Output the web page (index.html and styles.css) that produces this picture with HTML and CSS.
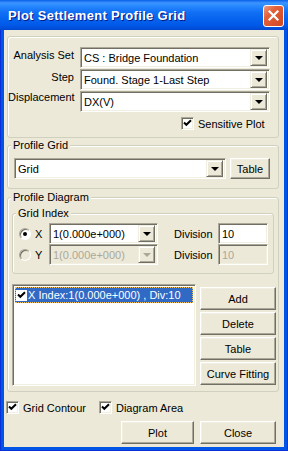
FILE: index.html
```html
<!DOCTYPE html>
<html>
<head>
    <meta charset='utf-8'>
    <title>Plot Settlement Profile Grid</title>
    <link rel="stylesheet" href="styles.css">
</head>
<body>
<div class="window">
    <div class="titlebar">
        <span class="title">Plot Settlement Profile Grid</span>
        <span class="close">
            <svg width="11" height="11" viewBox="0 0 11 11"><path d="M1.5 1.5 L9.5 9.5 M9.5 1.5 L1.5 9.5" stroke="#fff" stroke-width="2.2" stroke-linecap="square"/></svg>
        </span>
    </div>
    <div class="frame">
        <div class="client">

            <!-- analysis set / step / displacement -->
            <div class="group g-top">
                <div class="rows">
                    <div class="row">
                        <span class="lbl">Analysis Set</span>
                        <div class="combo c-wide"><span class="ctext">CS : Bridge Foundation</span><span class="arrow"><i class="tri"></i></span></div>
                    </div>
                    <div class="row">
                        <span class="lbl">Step</span>
                        <div class="combo c-wide"><span class="ctext">Found. Stage 1-Last Step</span><span class="arrow"><i class="tri"></i></span></div>
                    </div>
                    <div class="row">
                        <span class="lbl lbl-hi">Displacement</span>
                        <div class="combo c-wide"><span class="ctext">DX(V)</span><span class="arrow"><i class="tri"></i></span></div>
                    </div>
                </div>
                <div class="checkrow sens">
                    <span class="check"><svg width="9" height="9" viewBox="0 0 9 9"><path d="M1 3.5 L3.3 5.8 L8 1.2" fill="none" stroke="#000" stroke-width="2"/></svg></span>
                    <span>Sensitive Plot</span>
                </div>
            </div>

            <!-- profile grid -->
            <div class="group g-grid">
                <span class="legend">Profile Grid</span>
                <div class="row">
                    <div class="combo c-grid"><span class="ctext">Grid</span><span class="arrow"><i class="tri"></i></span></div>
                    <button class="btn b-table">Table</button>
                </div>
            </div>

            <!-- profile diagram -->
            <div class="group g-diagram">
                <span class="legend">Profile Diagram</span>
                <div class="group g-index">
                    <span class="legend">Grid Index</span>
                    <div class="row idx-row">
                        <span class="radio on"><i class="dot"></i></span>
                        <span class="axis">X</span>
                        <div class="combo c-idx"><span class="ctext">1(0.000e+000)</span><span class="arrow"><i class="tri"></i></span></div>
                        <span class="div-lbl">Division</span>
                        <div class="edit"><span class="ctext">10</span></div>
                    </div>
                    <div class="row idx-row off">
                        <span class="radio"></span>
                        <span class="axis">Y</span>
                        <div class="combo c-idx"><span class="ctext">1(0.000e+000)</span><span class="arrow"><i class="tri"></i></span></div>
                        <span class="div-lbl">Division</span>
                        <div class="edit"><span class="ctext">10</span></div>
                    </div>
                </div>
                <div class="listarea">
                    <div class="list">
                        <div class="item sel">
                            <span class="check small"><svg width="9" height="9" viewBox="0 0 9 9"><path d="M1 3.5 L3.3 5.8 L8 1.2" fill="none" stroke="#000" stroke-width="2"/></svg></span>
                            <span>X Index:1(0.000e+000) , Div:10</span>
                        </div>
                    </div>
                    <div class="sidebtns">
                        <button class="btn">Add</button>
                        <button class="btn">Delete</button>
                        <button class="btn">Table</button>
                        <button class="btn">Curve Fitting</button>
                    </div>
                </div>
            </div>

            <div class="checkrow bottomchecks">
                <span class="check"><svg width="9" height="9" viewBox="0 0 9 9"><path d="M1 3.5 L3.3 5.8 L8 1.2" fill="none" stroke="#000" stroke-width="2"/></svg></span>
                <span>Grid Contour</span>
                <span class="check c2"><svg width="9" height="9" viewBox="0 0 9 9"><path d="M1 3.5 L3.3 5.8 L8 1.2" fill="none" stroke="#000" stroke-width="2"/></svg></span>
                <span>Diagram Area</span>
            </div>

            <div class="actions">
                <button class="btn b-plot">Plot</button>
                <button class="btn b-close">Close</button>
            </div>
        </div>
    </div>
</div>
</body>
</html>
```

FILE: styles.css
```css
* {
    box-sizing: border-box;
}
body {
    margin: 0;
    font-family: "Liberation Sans", Arial, sans-serif;
    font-size: 11px;
    color: #000;
    background: #fff;
}
.window {
    width: 288px;
    height: 451px;
    display: flex;
    flex-direction: column;
}
.titlebar {
    height: 30px;
    flex: none;
    display: flex;
    align-items: center;
    justify-content: space-between;
    padding: 0 4px 0 8px;
    background: linear-gradient(#0A5FE8 0%, #3D95FF 10%, #2A8BFF 18%, #1270F5 40%, #0563EE 65%, #0058E6 85%, #0048D0 100%);
}
.title {
    color: #fff;
    font-weight: bold;
    font-size: 13px;
    letter-spacing: 0.3px;
    text-shadow: 1px 1px #0A1883;
}
.close {
    width: 21px;
    height: 22px;
    margin-top: 1px;
    display: flex;
    align-items: center;
    justify-content: center;
    border: 1px solid #fff;
    border-radius: 3px;
    background: linear-gradient(135deg, #EE9A80 0%, #E2603A 35%, #CF4822 100%);
}
.frame {
    flex: 1;
    display: flex;
    background: #0055E5;
    padding: 0 4px 4px 4px;
    box-shadow: inset 1px 0 #0831D9, inset -1px 0 #0831D9, inset 0 -1px #0831D9;
}
.client {
    flex: 1;
    background: #ECE9D8;
    padding-top: 6px;
    display: flex;
    flex-direction: column;
}

/* group boxes */
.group {
    position: relative;
    border: 1px solid #D0D0BF;
    border-radius: 3px;
    box-shadow: inset 1px 1px #fff;
}
.legend {
    position: absolute;
    top: -7px;
    left: 3px;
    padding: 0 2px;
    line-height: 13px;
    background: #ECE9D8;
}
.g-top {
    margin-left: 3px;
    width: 272px;
    height: 102px;
    padding-top: 10px;
}
.g-grid {
    margin: 7px 0 0 3px;
    width: 272px;
    height: 44px;
    padding: 12px 0 0 6px;
}
.g-diagram {
    margin: 8px 0 0 3px;
    width: 272px;
    height: 195px;
    padding: 15px 0 0 4px;
}
.g-index {
    width: 262px;
    height: 61px;
    padding: 9px 0 0 5px;
}

.rows {
    display: flex;
    flex-direction: column;
    gap: 1px;
}
.row {
    display: flex;
    align-items: center;
    height: 21px;
}
.lbl {
    width: 66px;
    text-align: right;
    margin-right: 6px;
    align-self: flex-start;
    padding-top: 2px;
}
.lbl-hi {
    padding-top: 0;
}

/* combo boxes and edits */
.combo, .edit {
    height: 21px;
    display: flex;
    align-items: center;
    background: #fff;
    border: 1px solid;
    border-color: #ACA899 #fff #fff #ACA899;
    box-shadow: inset 1px 1px #716F64, inset -1px -1px #F1EFE2;
    padding: 2px;
}
.ctext {
    flex: 1;
    padding-left: 1px;
    white-space: nowrap;
    overflow: hidden;
}
.arrow {
    width: 17px;
    height: 17px;
    display: flex;
    align-items: center;
    justify-content: center;
    background: #ECE9D8;
    border: 1px solid;
    border-color: #F1EFE2 #716F64 #716F64 #F1EFE2;
    box-shadow: inset 1px 1px #fff, inset -1px -1px #ACA899;
}
.tri {
    width: 0;
    height: 0;
    border-left: 4px solid transparent;
    border-right: 4px solid transparent;
    border-top: 4px solid #000;
    margin-top: 1px;
}
.c-wide {
    width: 190px;
}
.c-grid {
    width: 212px;
}
.c-idx {
    width: 109px;
}
.edit {
    width: 50px;
}

/* buttons */
.btn {
    font-family: inherit;
    font-size: 11px;
    color: #000;
    height: 23px;
    padding: 0;
    background: #ECE9D8;
    border: 1px solid;
    border-color: #fff #716F64 #716F64 #fff;
    box-shadow: inset -1px -1px #ACA899, inset 1px 1px #F1EFE2;
}
.b-table {
    width: 40px;
    height: 21px;
    margin-left: 4px;
}

/* checks and radios */
.checkrow {
    display: flex;
    align-items: center;
    height: 13px;
}
.check {
    width: 13px;
    height: 13px;
    flex: none;
    display: flex;
    align-items: center;
    justify-content: center;
    background: #fff;
    border: 1px solid;
    border-color: #ACA899 #fff #fff #ACA899;
    box-shadow: inset 1px 1px #716F64, inset -1px -1px #F1EFE2;
    margin-right: 4px;
}
.sens {
    margin: 5px 0 0 173px;
}
.radio {
    width: 12px;
    height: 12px;
    flex: none;
    margin-left: 1px;
    border-radius: 50%;
    background: #fff;
    border: 1px solid;
    border-color: #ACA899 #fff #fff #ACA899;
    box-shadow: inset 1px 1px #716F64;
    display: flex;
    align-items: center;
    justify-content: center;
}
.dot {
    width: 4px;
    height: 4px;
    border-radius: 50%;
    background: #000;
}
.axis {
    width: 18px;
    padding-left: 4px;
}
.div-lbl {
    width: 60px;
    padding-left: 16px;
}
.off .radio,
.off .combo,
.off .edit {
    background: #ECE9D8;
}
.off .ctext {
    color: #ACA899;
}
.off .tri {
    border-top-color: #ACA899;
}

/* list */
.listarea {
    display: flex;
    margin-top: 10px;
}
.list {
    width: 184px;
    height: 102px;
    background: #fff;
    border: 1px solid;
    border-color: #ACA899 #fff #fff #ACA899;
    box-shadow: inset 1px 1px #716F64, inset -1px -1px #F1EFE2;
    padding: 2px;
}
.item {
    display: flex;
    align-items: center;
    height: 16px;
    white-space: nowrap;
}
.item.sel {
    background: #316AC5;
    color: #fff;
    outline: 1px dotted #F2C060;
    outline-offset: -1px;
}
.check.small {
    margin: 0 1px 0 1px;
    border: 0;
    box-shadow: none;
    width: 11px;
    height: 11px;
}
.sidebtns {
    display: flex;
    flex-direction: column;
    gap: 2px;
    margin: 3px 0 0 4px;
}
.sidebtns .btn {
    width: 76px;
}

/* bottom */
.bottomchecks {
    margin: 9px 0 0 2px;
}
.check.c2 {
    margin-left: 13px;
}
.actions {
    display: flex;
    justify-content: flex-end;
    gap: 6px;
    margin-top: 7px;
    padding-right: 8px;
}
.b-plot {
    width: 73px;
}
.b-close {
    width: 76px;
}
```
